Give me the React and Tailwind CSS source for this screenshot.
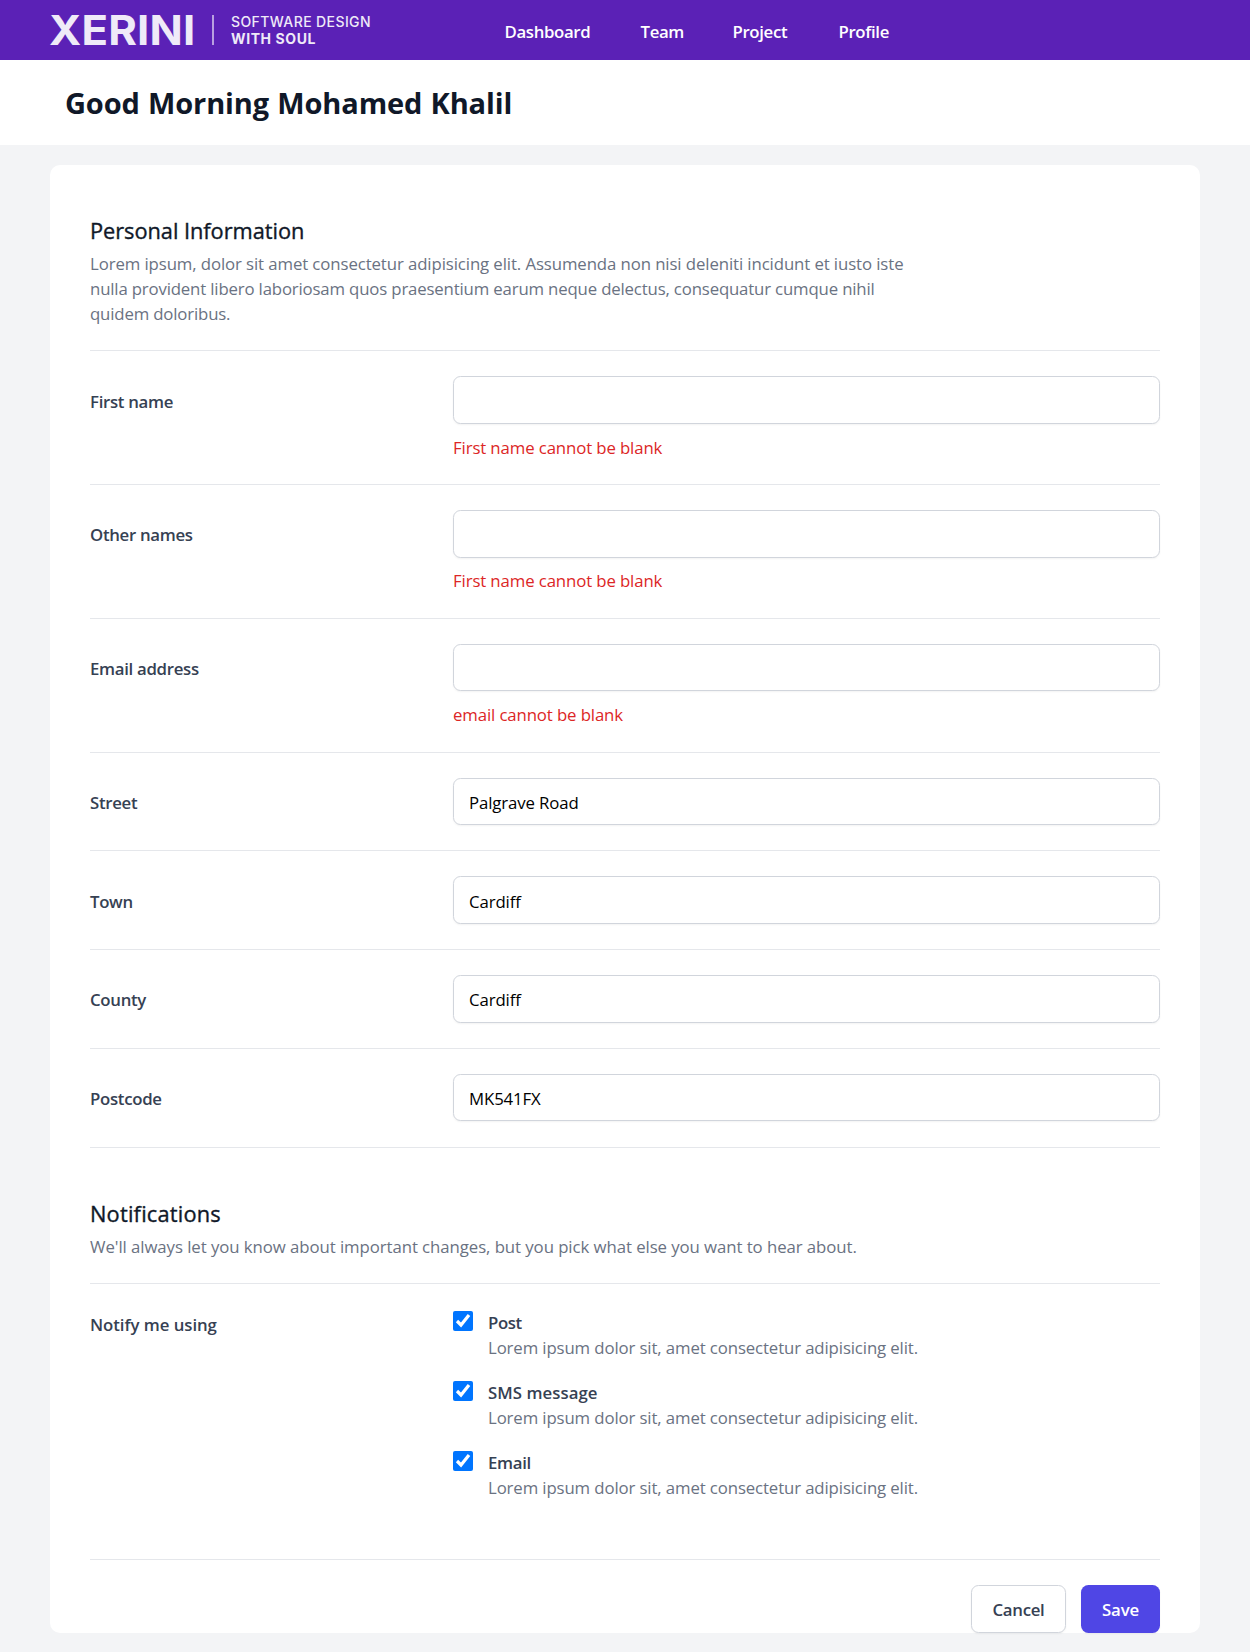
const NAV = [
  { label: 'Dashboard', width: 'w-[86px]' },
  { label: 'Team', width: 'w-[42px]' },
  { label: 'Project', width: 'w-[56px]' },
  { label: 'Profile', width: 'w-[52px]' },
];

const FIELDS = [
  { label: 'First name', value: '', error: 'First name cannot be blank' },
  { label: 'Other names', value: '', error: 'First name cannot be blank' },
  { label: 'Email address', value: '', error: 'email cannot be blank' },
  { label: 'Street', value: 'Palgrave Road' },
  { label: 'Town', value: 'Cardiff' },
  { label: 'County', value: 'Cardiff' },
  { label: 'Postcode', value: 'MK541FX' },
];

const CHANNELS = [
  { label: 'Post', tracking: 'tracking-[-0.4px]' },
  { label: 'SMS message', tracking: 'tracking-[0.05px]' },
  { label: 'Email', tracking: 'tracking-[-0.3px]' },
];

function Logo() {
  return (
    <div className="flex h-[30px] items-center whitespace-nowrap font-['Inter',sans-serif] text-[#efeaf8]">
      <div className="flex w-[163px]">
        <span className="block origin-left scale-x-[1.065] text-[41px] font-bold leading-[30px] tracking-[0.2px]">
          XERINI
        </span>
      </div>
      <span className="h-[30px] w-[2px] bg-[#b9a0e0]" />
      <div className="ml-[17px] flex flex-col text-[14px] leading-[17px]">
        <span className="font-medium tracking-[0.4px]">SOFTWARE DESIGN</span>
        <span className="font-bold tracking-[0.6px]">WITH SOUL</span>
      </div>
    </div>
  );
}

function Field({ label, value, error }) {
  return (
    <div
      className={
        (error ? 'h-[133.75px]' : 'h-[98.75px]') +
        ' flex items-start border-t border-gray-200 pt-[25px]'
      }
    >
      <label className="w-[363px] shrink-0 pt-[12.25px] text-[16.8px] font-semibold leading-[25px] tracking-[-0.3px] text-gray-700">
        {label}
      </label>
      <div className="flex-1">
        <input
          defaultValue={value}
          className="block h-[47.5px] w-full rounded-[7.5px] border border-gray-300 bg-white px-[15px] pt-[2px] text-[16.8px] tracking-[-0.12px] text-black shadow-xs outline-none"
        />
        {error && (
          <p className="mt-[10.75px] text-[16.8px] leading-[25px] tracking-[-0.12px] text-[#dc2626]">{error}</p>
        )}
      </div>
    </div>
  );
}

export default function App() {
  return (
    <div className="h-[1652px] overflow-hidden bg-gray-100 font-['Open_Sans','Noto_Sans',sans-serif]">
      <nav className="flex h-[60px] items-center bg-[#5b21b6] pl-[49px]">
        <div className="w-[455.5px]">
          <Logo />
        </div>
        <div className="flex gap-[50px] pt-[3px] text-[16.8px] font-semibold leading-[25px] tracking-[-0.35px] text-white">
          {NAV.map((n) => (
            <a key={n.label} className={n.width + ' whitespace-nowrap'}>
              {n.label}
            </a>
          ))}
        </div>
      </nav>

      <header className="flex h-[85px] items-center bg-white pl-[65px]">
        <h1 className="text-[29px] font-bold leading-[40px] tracking-[-0.14px] text-gray-900 [word-spacing:1px]">
          Good Morning Mohamed Khalil
        </h1>
      </header>

      <main className="mx-[50px] mt-[20px] h-[1468px] rounded-[10px] bg-white px-[40px] pt-[51px]">
        <section>
          <h2 className="text-[21.8px] leading-[30px] tracking-[-0.05px] text-gray-900 [-webkit-text-stroke:0.35px]">
            Personal Information
          </h2>
          <p className="mt-[5px] h-[99.3px] whitespace-nowrap text-[16.8px] leading-[25px] tracking-[-0.165px] text-gray-500">
            <span className="tracking-[-0.1px]">
              Lorem ipsum, dolor sit amet consectetur adipisicing elit. Assumenda non nisi deleniti incidunt et iusto iste
            </span>
            <br />
            nulla provident libero laboriosam quos praesentium earum neque delectus, consequatur cumque nihil
            <br />
            quidem doloribus.
          </p>
          {FIELDS.map((f) => (
            <Field key={f.label} {...f} />
          ))}
          <div className="border-t border-gray-200" />
        </section>

        <section className="pt-[51.7px]">
          <h2 className="text-[21.8px] leading-[30px] tracking-[0.2px] text-gray-900 [-webkit-text-stroke:0.35px]">
            Notifications
          </h2>
          <p className="mt-[4.5px] h-[49.5px] text-[16.8px] leading-[25px] tracking-[-0.07px] text-gray-500">
            We'll always let you know about important changes, but you pick what else you want to hear about.
          </p>
          <div className="flex h-[276px] border-t border-gray-200 pt-[27px]">
            <div className="w-[363px] shrink-0 text-[16.8px] font-semibold leading-[28px] tracking-[-0.05px] text-gray-700">
              Notify me using
            </div>
            <div className="flex flex-col gap-[20px]">
              {CHANNELS.map((c) => (
                <div key={c.label} className="flex h-[50px]">
                  <input type="checkbox" defaultChecked className="h-[20px] w-[20px] shrink-0" />
                  <div className="-mt-px ml-[15px] text-[16.8px] leading-[25px]">
                    <div className={c.tracking + ' font-semibold text-gray-700'}>{c.label}</div>
                    <p className="tracking-[-0.12px] text-gray-500">
                      Lorem ipsum dolor sit, amet consectetur adipisicing elit.
                    </p>
                  </div>
                </div>
              ))}
            </div>
          </div>
        </section>

        <div className="flex justify-end gap-[15px] border-t border-gray-200 pt-[25px] text-[16.8px]">
          <button className="h-[48px] w-[95px] rounded-[7.5px] border border-gray-300 bg-white pt-[1px] font-semibold tracking-[-0.3px] text-gray-700 shadow-xs">
            Cancel
          </button>
          <button className="h-[48px] w-[79px] rounded-[7.5px] bg-[#4f46e5] pt-[1px] font-semibold tracking-[-0.1px] text-white shadow-xs">
            Save
          </button>
        </div>
      </main>
    </div>
  );
}
